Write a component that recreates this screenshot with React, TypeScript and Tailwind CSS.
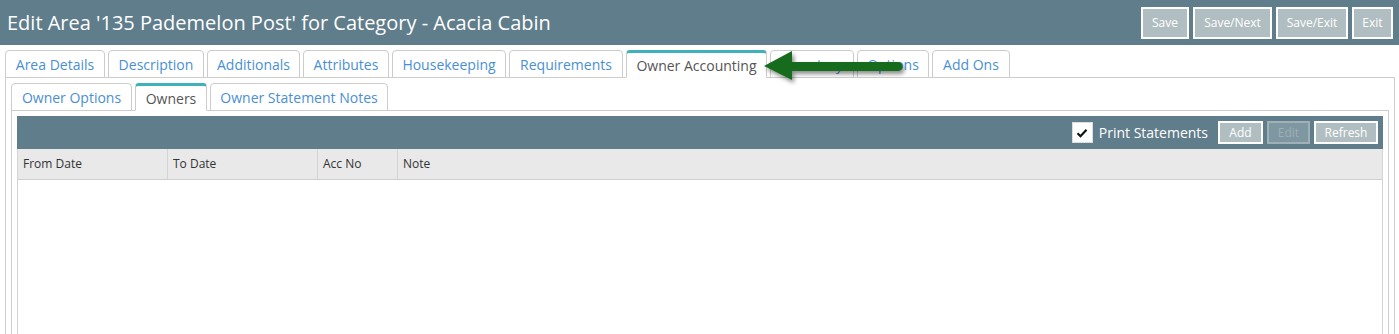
import React from "react";

const outerTabs = [
  { label: "Area Details", w: 100 },
  { label: "Description", w: 96 },
  { label: "Additionals", w: 93 },
  { label: "Attributes", w: 86 },
  { label: "Housekeeping", w: 114 },
  { label: "Requirements", w: 114 },
  { label: "Owner Accounting", w: 141, active: true },
  { label: "Inventory", w: 84 },
  { label: "Options", w: 72 },
  { label: "Add Ons", w: 78 },
];

const innerTabs = [
  { label: "Owner Options", w: 121 },
  { label: "Owners", w: 72, active: true },
  { label: "Owner Statement Notes", w: 178 },
];

function Tab({ label, w, active }: { label: string; w: number; active?: boolean }) {
  return (
    <div
      style={{ width: w }}
      className={
        "h-[28px] -mb-px flex items-center justify-center rounded-t-[4px] border text-[14px] whitespace-nowrap " +
        (active
          ? "bg-white border-[#ccc] border-b-white border-t-[3px] border-t-[#3fb1bb] text-[#555] pt-[1px]"
          : "bg-white border-[#ccc] text-[#4a8fd4]")
      }
    >
      {label}
    </div>
  );
}

function HeaderBtn({ label, w }: { label: string; w: number }) {
  return (
    <div
      style={{ width: w }}
      className="h-[32px] flex items-center justify-center border-2 border-white bg-[#b1bec1] text-white text-[12px]"
    >
      {label}
    </div>
  );
}

export default function App() {
  return (
    <div className="relative w-[1399px] h-[334px] overflow-hidden bg-white font-['Open_Sans',sans-serif]">
      {/* Header */}
      <div className="h-[45px] bg-[#607d8b] flex items-center justify-between pl-[7px] pr-[6px]">
        <div className="text-white text-[20px] leading-none">
          Edit Area '135 Pademelon Post' for Category - Acacia Cabin
        </div>
        <div className="flex gap-[4px] pt-[1px]">
          <HeaderBtn label="Save" w={48} />
          <HeaderBtn label="Save/Next" w={79} />
          <HeaderBtn label="Save/Exit" w={72} />
          <HeaderBtn label="Exit" w={41} />
        </div>
      </div>

      {/* Outer tabs + panel */}
      <div className="mt-[5px] mx-[5px] w-[1390px]">
        <div className="flex gap-[3px] border-b border-[#ccc] h-[28px]">
          {outerTabs.map((t) => (
            <Tab key={t.label} {...t} />
          ))}
        </div>
        <div className="border-l border-r border-[#ccc] px-[5px] pt-[5px] h-[300px]">
          <div className="flex gap-[3px] border-b border-[#ccc] h-[28px]">
            {innerTabs.map((t) => (
              <Tab key={t.label} {...t} />
            ))}
          </div>
          <div className="border-l border-r border-[#ccc] px-[5px] pt-[5px] h-[300px]">
            <div className="border-l border-r border-[#d4d4d4] h-[300px]">
              {/* Grid toolbar */}
              <div className="h-[33px] bg-[#607d8b] flex items-center justify-end pr-[5px] -mx-px">
                <div className="flex items-center mr-[10px]">
                  <div className="w-[21px] h-[21px] bg-white border border-[#ddd] flex items-center justify-center">
                    <svg width="12" height="10" viewBox="0 0 12 10">
                      <path d="M1.5 5.2 L4.5 8.2 L10.5 1.8" fill="none" stroke="#111" strokeWidth="2.2" />
                    </svg>
                  </div>
                  <span className="ml-[6px] text-white text-[14px]">Print Statements</span>
                </div>
                <div className="flex gap-[4px]">
                  <div className="w-[45px] h-[23px] border-2 border-white bg-[#b1bec1] text-white text-[12px] flex items-center justify-center">
                    Add
                  </div>
                  <div className="w-[43px] h-[23px] border-2 border-[#9fb1b7] bg-[#7f97a0] text-[#9cb0b6] text-[12px] flex items-center justify-center">
                    Edit
                  </div>
                  <div className="w-[64px] h-[23px] border-2 border-white bg-[#b1bec1] text-white text-[12px] flex items-center justify-center">
                    Refresh
                  </div>
                </div>
              </div>
              {/* Column header */}
              <div className="h-[31px] bg-[#e9e9e9] border-b border-[#d0d0d0] flex text-[12px] text-[#333]">
                <div className="w-[150px] border-r border-[#d4d4d4] flex items-center pl-[5px]">From Date</div>
                <div className="w-[150px] border-r border-[#d4d4d4] flex items-center pl-[5px]">To Date</div>
                <div className="w-[80px] border-r border-[#d4d4d4] flex items-center pl-[5px]">Acc No</div>
                <div className="flex-1 flex items-center pl-[5px]">Note</div>
              </div>
            </div>
          </div>
        </div>
      </div>

      {/* Green arrow annotation */}
      <svg
        className="absolute left-[755px] top-[44px]"
        width="160"
        height="50"
        viewBox="0 0 160 50"
      >
        <defs>
          <filter id="sh" x="-20%" y="-40%" width="140%" height="180%">
            <feDropShadow dx="2" dy="3" stdDeviation="2" floodColor="#000" floodOpacity="0.45" />
          </filter>
        </defs>
        <g filter="url(#sh)">
          <path d="M9 22 L37 7 L37 18 L143 18 A4.5 4.5 0 0 1 143 27 L37 27 L37 36 Z" fill="#176c1e" />
        </g>
      </svg>
    </div>
  );
}
